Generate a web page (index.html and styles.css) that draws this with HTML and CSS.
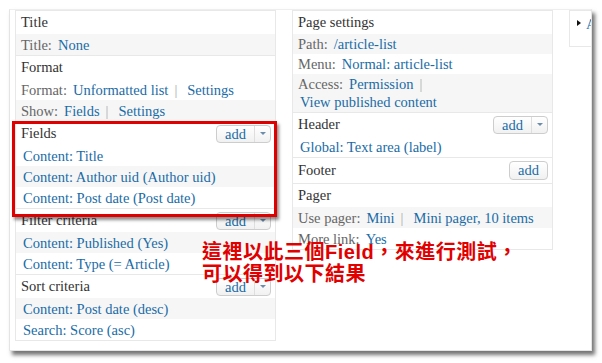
FILE: index.html
```html
<!DOCTYPE html>
<html>
<head>
<meta charset="utf-8">
<link rel="stylesheet" href="styles.css">
</head>
<body>
<div class="card">
  <div class="cols">
    <div class="col">
      <div class="sec">
        <div class="head"><span>Title</span></div>
        <div class="item gray"><span class="lbl">Title:</span><a class="lk">None</a></div>
      </div>
      <div class="sec">
        <div class="head"><span>Format</span></div>
        <div class="item"><span class="lbl">Format:</span><a class="lk">Unformatted list</a><span class="sep">|</span><a class="lk">Settings</a></div>
        <div class="item gray"><span class="lbl">Show:</span><a class="lk">Fields</a><span class="sep">|</span><a class="lk">Settings</a></div>
      </div>
      <div class="sec">
        <div class="head"><span>Fields</span><span class="btn"><span class="btn-main">add</span><span class="btn-caret"><i></i></span></span></div>
        <div class="item"><a class="lk solo">Content: Title</a></div>
        <div class="item gray"><a class="lk solo">Content: Author uid (Author uid)</a></div>
        <div class="item"><a class="lk solo">Content: Post date (Post date)</a></div>
      </div>
      <div class="sec">
        <div class="head"><span>Filter criteria</span><span class="btn"><span class="btn-main">add</span><span class="btn-caret"><i></i></span></span></div>
        <div class="item gray"><a class="lk solo">Content: Published (Yes)</a></div>
        <div class="item"><a class="lk solo">Content: Type (= Article)</a></div>
      </div>
      <div class="sec">
        <div class="head"><span>Sort criteria</span><span class="btn"><span class="btn-main">add</span><span class="btn-caret"><i></i></span></span></div>
        <div class="item gray"><a class="lk solo">Content: Post date (desc)</a></div>
        <div class="item"><a class="lk solo">Search: Score (asc)</a></div>
      </div>
    </div>
    <div class="col">
      <div class="sec">
        <div class="head"><span>Page settings</span></div>
        <div class="item tight gray"><span class="lbl">Path:</span><a class="lk">/article-list</a></div>
        <div class="item tight"><span class="lbl">Menu:</span><a class="lk">Normal: article-list</a></div>
        <div class="item tight gray"><span class="lbl">Access:</span><a class="lk">Permission</a><span class="sep">|</span><br><a class="lk solo">View published content</a></div>
      </div>
      <div class="sec">
        <div class="head"><span>Header</span><span class="btn"><span class="btn-main">add</span><span class="btn-caret"><i></i></span></span></div>
        <div class="item"><a class="lk solo">Global: Text area (label)</a></div>
      </div>
      <div class="sec">
        <div class="head tall"><span>Footer</span><span class="btn big"><span class="btn-main">add</span></span></div>
      </div>
      <div class="sec">
        <div class="head"><span>Pager</span></div>
        <div class="item gray"><span class="lbl">Use pager:</span><a class="lk">Mini</a><span class="sep">|</span><a class="lk">Mini pager, 10 items</a></div>
        <div class="item"><span class="lbl">More link:</span><a class="lk">Yes</a></div>
      </div>
    </div>
    <div class="col3"><span class="tri"></span><a class="lk">Advanced</a></div>
  </div>
</div>
<div class="redbox"></div>
<div class="note">這裡以此三個Field，來進行測試，<br>可以得到以下結果</div>
</body>
</html>
```
FILE: styles.css
```css
html, body {
  margin: 0;
  padding: 0;
  background: #fff;
}
body {
  width: 602px;
  height: 363px;
  position: relative;
  overflow: hidden;
  font-family: "Liberation Serif", serif;
  font-size: 14.5px;
  color: #333;
}
.card {
  position: absolute;
  left: 9px;
  top: 9px;
  width: 583px;
  height: 342px;
  box-sizing: border-box;
  border: 1px solid #e4e4e4;
  border-top-color: #eee;
  background: #fff;
  box-shadow: 3px 4px 4px rgba(0, 0, 0, 0.55);
  overflow: hidden;
  padding: 0 0 0 5px;
}
.cols {
  display: flex;
  gap: 16px;
  align-items: flex-start;
}
.col {
  width: 261px;
  flex: none;
  box-sizing: border-box;
  border: 1px solid #e8e8e8;
  background: #fff;
}
.sec + .sec {
  border-top: 1px solid #e8e8e8;
}
.head {
  height: 23px;
  display: flex;
  align-items: center;
  justify-content: space-between;
  padding: 0 4px 0 5px;
  color: #333;
}
.head.tall {
  height: 25px;
}
.item {
  line-height: 18px;
  padding: 1.5px 5px;
  white-space: nowrap;
}
.item.tight {
  padding: 1px 5px;
}
.item.gray {
  background: #f6f6f6;
}
.lbl {
  color: #666;
  margin-right: 6px;
}
.lk {
  color: #1a6ca6;
  text-decoration: none;
}
.lk.solo {
  padding-left: 2px;
}
.sep {
  color: #aaa;
  margin: 0 10px 0 6px;
}
.btn {
  display: inline-flex;
  height: 18px;
  box-sizing: border-box;
  border: 1px solid #cdcdcd;
  border-radius: 4px;
  background: linear-gradient(#ffffff, #f1f1f1);
  line-height: 16px;
}
.btn.big {
  height: 19px;
  line-height: 17px;
}
.btn-main {
  width: 37px;
  text-align: center;
  color: #1a6ca6;
}
.btn-caret {
  width: 15px;
  border-left: 1px solid #dedede;
  display: flex;
  align-items: center;
  justify-content: center;
}
.btn-caret i {
  display: block;
  width: 0;
  height: 0;
  border-left: 3px solid transparent;
  border-right: 3px solid transparent;
  border-top: 3px solid #6c8cab;
}
.col3 {
  flex: none;
  width: 60px;
  height: 37px;
  box-sizing: border-box;
  border: 1px solid #e8e8e8;
  padding: 4px 0 0 7px;
  display: flex;
  align-items: flex-start;
  gap: 5px;
  line-height: 18px;
  white-space: nowrap;
}
.tri {
  margin-top: 5px;
  width: 0;
  height: 0;
  border-top: 3.5px solid transparent;
  border-bottom: 3.5px solid transparent;
  border-left: 4px solid #111;
}
.redbox {
  position: absolute;
  left: 12px;
  top: 121px;
  width: 265px;
  height: 96px;
  box-sizing: border-box;
  border: 3px solid #e00000;
  box-shadow: 2px 3px 3px rgba(0, 0, 0, 0.45);
}
.note {
  position: absolute;
  left: 202px;
  top: 241px;
  font-family: "Liberation Sans", "Noto Sans CJK TC", sans-serif;
  font-weight: bold;
  font-size: 20px;
  line-height: 22px;
  letter-spacing: 0.5px;
  color: #e00000;
  white-space: nowrap;
}
```
